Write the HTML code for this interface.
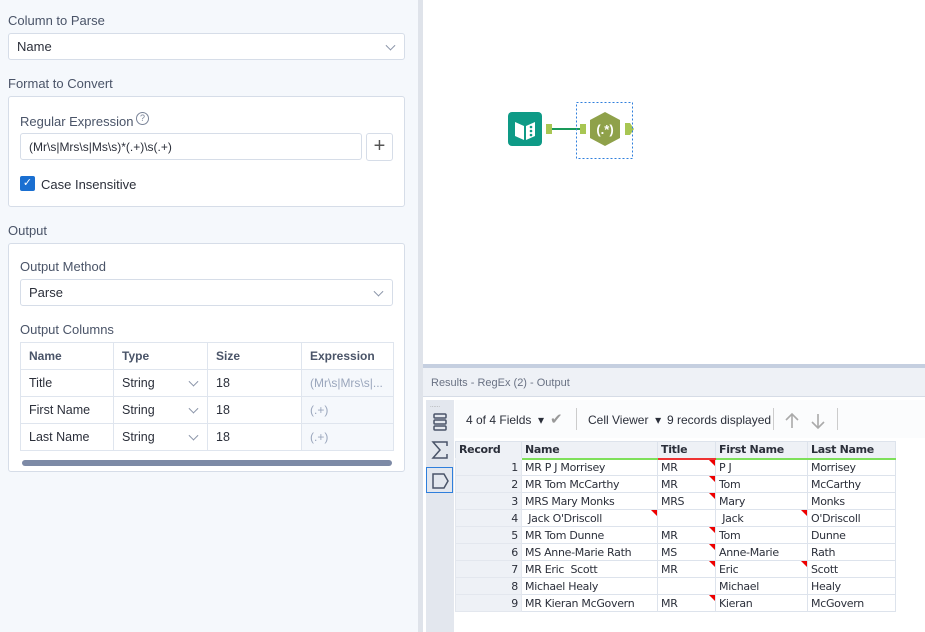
<!DOCTYPE html>
<html><head><style>
*{box-sizing:border-box;margin:0;padding:0}
body{width:925px;height:632px;overflow:hidden;font-family:"Liberation Sans",sans-serif;background:#fff;position:relative;color:#2b2f3a}
.abs{position:absolute}
#left{left:0;top:0;width:418px;height:632px;background:#f5f8fc}
.lbl{font-size:13px;color:#4a5468}
.box{background:#fff;border:1px solid #d6dde8;border-radius:3px}
.sel{font-size:13px;color:#2b2f3a;padding-left:8px;display:flex;align-items:center}
.chev{position:absolute;right:10px;top:50%;width:7px;height:7px;border-right:1.3px solid #8a94a8;border-bottom:1.3px solid #8a94a8;transform:translateY(-70%) rotate(45deg)}
table{border-collapse:collapse}
.oc td{border:1px solid #dfe5ee;height:27px;font-size:12.5px;padding-left:8px;position:relative}
.rt td{height:17px;font-size:11px;border:1px solid #dde3ec;padding-left:3px;white-space:nowrap;position:relative;font-family:"DejaVu Sans","Liberation Sans",sans-serif;letter-spacing:-0.3px}
.rt td.n{text-align:right;padding-right:3px;background:#eef1f6;border-color:#e3e7ee}
.tri{position:absolute;right:0;top:0;width:0;height:0;border-top:6px solid #e00;border-left:6px solid transparent}
</style></head><body>
<div id="left" class="abs">
 <div class="abs lbl" style="left:8px;top:13px">Column to Parse</div>
 <div class="abs box sel" style="left:8px;top:33px;width:397px;height:27px">Name<span class="chev"></span></div>
 <div class="abs lbl" style="left:8px;top:76px">Format to Convert</div>
 <div class="abs box" style="left:8px;top:96px;width:397px;height:111px"></div>
 <div class="abs lbl" style="left:20px;top:114px">Regular Expression</div>
 <div class="abs" style="left:136px;top:112px;width:13px;height:13px;border:1.2px solid #7a8498;border-radius:50%;font-size:9px;color:#7a8498;text-align:center;line-height:11px">?</div>
 <div class="abs box sel" style="left:20px;top:133px;width:342px;height:27px;font-size:12px">(Mr\s|Mrs\s|Ms\s)*(.+)\s(.+)</div>
 <div class="abs box" style="left:366px;top:133px;width:27px;height:28px;font-size:20px;color:#555;text-align:center;line-height:25px">+</div>
 <div class="abs" style="left:20px;top:176px;width:15px;height:15px;background:#1a6fd1;border-radius:2px;color:#fff;font-size:11px;text-align:center;line-height:15px">✓</div>
 <div class="abs" style="left:41px;top:177px;font-size:13px">Case Insensitive</div>
 <div class="abs lbl" style="left:8px;top:223px">Output</div>
 <div class="abs box" style="left:8px;top:243px;width:397px;height:229px"></div>
 <div class="abs lbl" style="left:20px;top:259px">Output Method</div>
 <div class="abs box sel" style="left:20px;top:279px;width:373px;height:27px">Parse<span class="chev"></span></div>
 <div class="abs lbl" style="left:20px;top:322px">Output Columns</div>
 <table class="abs oc" style="left:20px;top:342px;width:374px;background:#fff">
  <tr><td style="width:93px;font-weight:bold;color:#4a5468;font-size:12px">Name</td><td style="width:94px;font-weight:bold;color:#4a5468;font-size:12px">Type</td><td style="width:94px;font-weight:bold;color:#4a5468;font-size:12px">Size</td><td style="font-weight:bold;color:#4a5468;font-size:12px">Expression</td></tr>
  <tr><td>Title</td><td>String<span class="chev"></span></td><td>18</td><td style="background:#f5f8fc;color:#9aa6bc;font-size:12px">(Mr\s|Mrs\s|...</td></tr>
  <tr><td>First Name</td><td>String<span class="chev"></span></td><td>18</td><td style="background:#f5f8fc;color:#9aa6bc;font-size:12px">(.+)</td></tr>
  <tr><td>Last Name</td><td>String<span class="chev"></span></td><td>18</td><td style="background:#f5f8fc;color:#9aa6bc;font-size:12px">(.+)</td></tr>
 </table>
 <div class="abs" style="left:22px;top:460px;width:370px;height:6px;background:#7d8aa6;border-radius:3px"></div>
</div>
<div class="abs" style="left:418px;top:0;width:5px;height:632px;background:#dfe3ea"></div>
<svg class="abs" style="left:500px;top:100px" width="140" height="62">
 <rect x="8" y="12" width="34" height="34" rx="4" fill="#0e9a86"/>
 <path d="M15 22 L24 26 L24 40 L15 36Z M26 26 L35 22 L35 36 L26 40Z" fill="#fff"/>
 <circle cx="31" cy="27" r="1.3" fill="#0e9a86"/><circle cx="31" cy="31" r="1.3" fill="#0e9a86"/><circle cx="31" cy="35" r="1.3" fill="#0e9a86"/>
 <path d="M46 24 h6 v10 h-6z" fill="#a8c653"/>
 <line x1="52" y1="29" x2="80" y2="29" stroke="#1a9a5a" stroke-width="2"/>
 <path d="M80 24 h6 v10 h-6z" fill="#a8c653"/>
 <polygon points="105,12 120,20 120,38 105,46 90,38 90,20" fill="#8fa14a"/>
 <text x="105" y="34" font-size="13" font-weight="bold" fill="#fff" text-anchor="middle" font-family="Liberation Sans">(.*)</text>
 <path d="M125 23 h5 l4 6 l-4 6 h-5z" fill="#a8c653"/>
 <rect x="76.5" y="2.5" width="56" height="56" fill="none" stroke="#2f7fdc" stroke-dasharray="2,2"/>
</svg>
<div class="abs" style="left:423px;top:364px;width:502px;height:4px;background:#c5cfe0"></div>
<div class="abs" style="left:423px;top:368px;width:502px;height:29px;background:#eef1f6;border-bottom:1px solid #d6dce6;font-size:11px;color:#6a7284;padding:9px 0 0 8px">Results - RegEx (2) - Output</div>
<div class="abs" style="left:423px;top:397px;width:502px;height:235px;background:#fff"></div>
<div class="abs" style="left:426px;top:400px;width:28px;height:232px;background:#e3e7ee"></div>
<svg class="abs" style="left:426px;top:400px" width="28" height="95">
 <text x="4" y="7" font-size="6" fill="#999">......</text>
 <g fill="none" stroke="#4a5468" stroke-width="1.5">
 <rect x="8" y="14" width="12" height="4" rx="1"/><rect x="8" y="20" width="12" height="4" rx="1"/><rect x="8" y="26" width="12" height="4" rx="1"/>
 <path d="M21 46 V42 H7 L14 50 L7 58 H21 V54"/>
 <path d="M7 74 h11 l4 7 l-4 7 h-11z"/>
 </g>
 <rect x="0.5" y="67.5" width="26" height="25" fill="none" stroke="#2f7fdc"/>
</svg>
<div class="abs" style="left:455px;top:400px;width:470px;height:38px;background:#fbfcfd;font-size:12px;color:#2b2f3a">
 <span class="abs" style="left:11px;top:13px">4 of 4 Fields &nbsp;▾</span>
 <span class="abs" style="left:95px;top:10px;color:#999;font-size:15px">✔</span>
 <span class="abs" style="left:121px;top:8px;width:1px;height:22px;background:#ccc"></span>
 <span class="abs" style="left:133px;top:13px">Cell Viewer &nbsp;▾</span>
 <span class="abs" style="left:212px;top:13px">9 records displayed</span>
 <span class="abs" style="left:318px;top:8px;width:1px;height:22px;background:#ccc"></span>
 <svg class="abs" style="left:328px;top:12px" width="50" height="18"><g fill="none" stroke="#aaa" stroke-width="1.6"><path d="M9 16 V2 M3 8 L9 2 L15 8"/><path d="M35 2 V16 M29 10 L35 16 L41 10"/></g></svg>
 <span class="abs" style="left:382px;top:8px;width:1px;height:22px;background:#ccc"></span>
</div>
<table class="abs rt" style="left:455px;top:441px;width:440px;table-layout:fixed">
 <colgroup><col style="width:66px"><col style="width:136px"><col style="width:58px"><col style="width:92px"><col style="width:88px"></colgroup>
 <tr style="background:#eef1f6"><td style="font-weight:bold;border-bottom:2px solid #eef1f6">Record</td><td style="font-weight:bold;border-bottom:2px solid #7ee05a">Name</td><td style="font-weight:bold;border-bottom:2px solid #e33">Title</td><td style="font-weight:bold;border-bottom:2px solid #7ee05a">First Name</td><td style="font-weight:bold;border-bottom:2px solid #7ee05a">Last Name</td></tr>
 <tr><td class="n">1</td><td>MR P J Morrisey</td><td>MR<i class="tri"></i></td><td>P J</td><td>Morrisey</td></tr>
 <tr><td class="n">2</td><td>MR Tom McCarthy</td><td>MR<i class="tri"></i></td><td>Tom</td><td>McCarthy</td></tr>
 <tr><td class="n">3</td><td>MRS Mary Monks</td><td>MRS<i class="tri"></i></td><td>Mary</td><td>Monks</td></tr>
 <tr><td class="n">4</td><td>&nbsp;Jack O'Driscoll<i class="tri"></i></td><td></td><td>&nbsp;Jack<i class="tri"></i></td><td>O'Driscoll</td></tr>
 <tr><td class="n">5</td><td>MR Tom Dunne</td><td>MR<i class="tri"></i></td><td>Tom</td><td>Dunne</td></tr>
 <tr><td class="n">6</td><td>MS Anne-Marie Rath</td><td>MS<i class="tri"></i></td><td>Anne-Marie</td><td>Rath</td></tr>
 <tr><td class="n">7</td><td>MR Eric &nbsp;Scott</td><td>MR<i class="tri"></i></td><td>Eric<i class="tri"></i></td><td>Scott</td></tr>
 <tr><td class="n">8</td><td>Michael Healy</td><td></td><td>Michael</td><td>Healy</td></tr>
 <tr><td class="n">9</td><td>MR Kieran McGovern</td><td>MR<i class="tri"></i></td><td>Kieran</td><td>McGovern</td></tr>
</table>
</body></html>
